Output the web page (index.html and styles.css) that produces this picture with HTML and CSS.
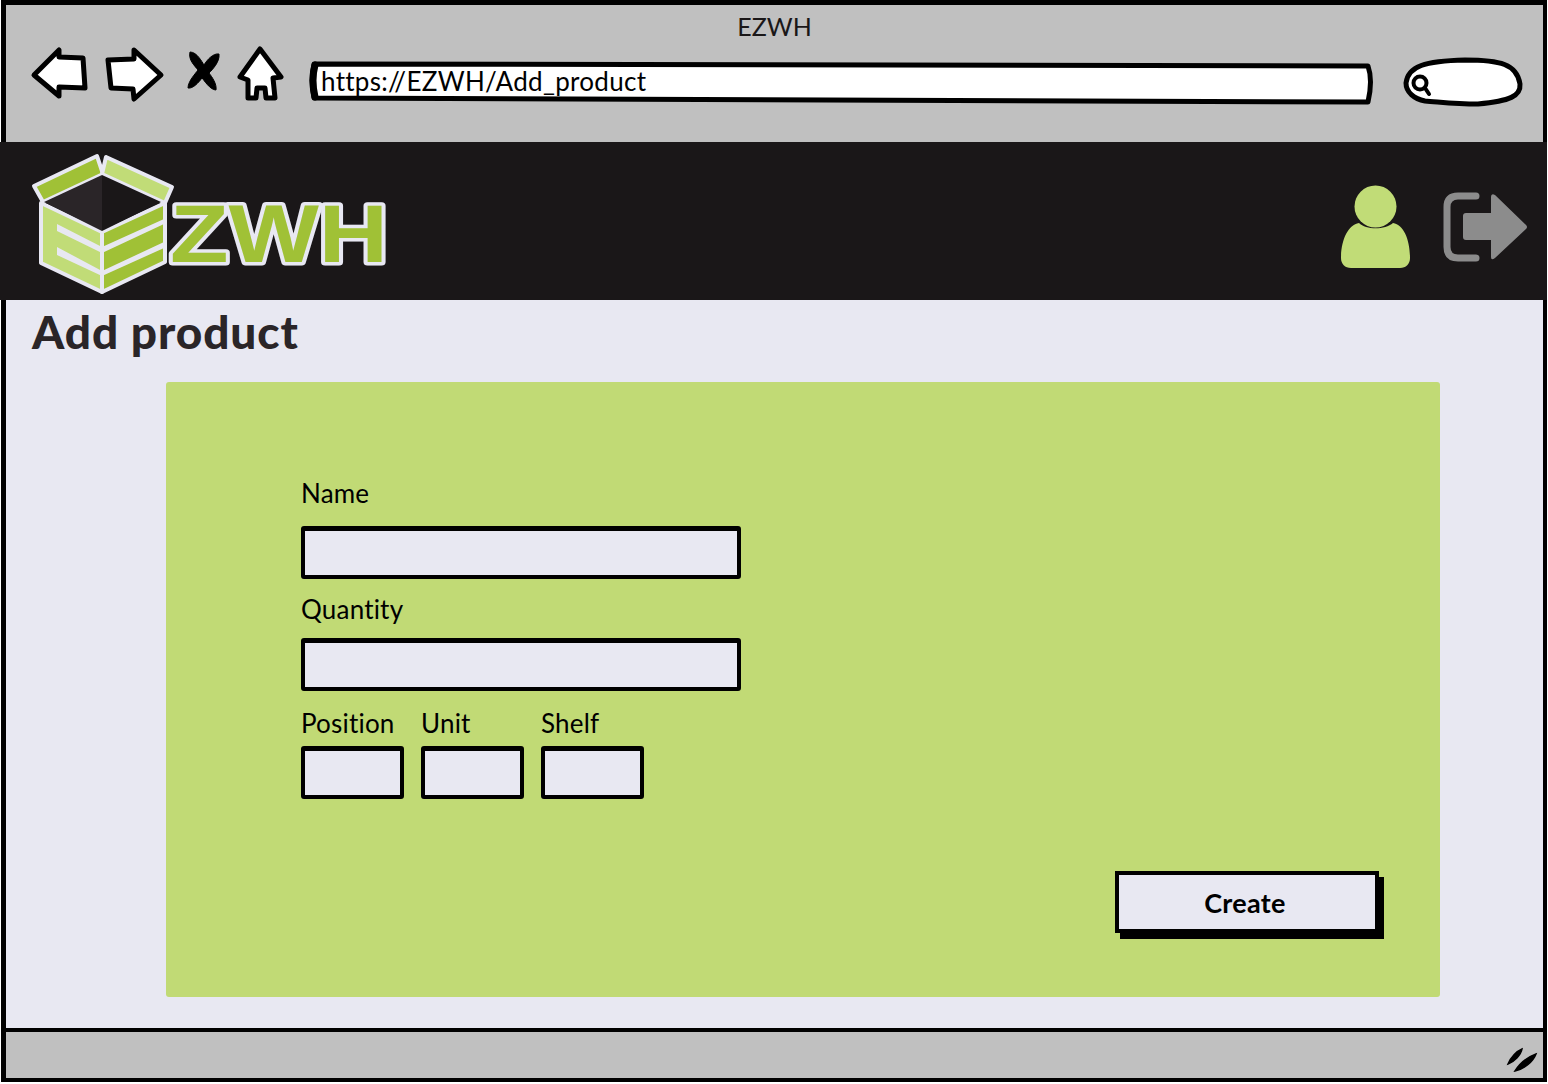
FILE: index.html
```html
<!DOCTYPE html>
<html lang="en">
<head>
    <meta charset="UTF-8">
    <meta name="viewport" content="width=device-width, initial-scale=1.0">
    <title>EZWH - Add product</title>
    <link rel="stylesheet" href="styles.css">
</head>
<body>
    <div class="window">
        <div class="chrome">
            <div class="chrome-title">EZWH</div>
            <div class="toolbar">
                <svg class="icon-back" width="60" height="60" viewBox="30 45 60 60">
                    <path class="sketch" d="M34 75 L59 50 L59 57 L83 58 L85 88 L59 87 L59 96 Z"/>
                </svg>
                <svg class="icon-forward" width="60" height="60" viewBox="105 45 60 60">
                    <path class="sketch" d="M108 60 L134 59 L134 50 L161 75 L134 99 L133 89 L111 88 Z"/>
                </svg>
                <svg class="icon-stop" width="36" height="60" viewBox="186 45 36 60">
                    <path class="stop-mark" d="M190 52 C197 52 202 62 204 65 C207 60 213 53 219 54 C220 62 212 70 209 73 C212 77 217 84 216 90 C210 90 204 80 202 78 C199 82 193 89 188 88 C188 81 196 73 198 70 C195 66 188 60 190 52 Z"/>
                </svg>
                <svg class="icon-home" width="50" height="60" viewBox="236 45 50 60">
                    <path class="sketch" d="M260 49 L281 77 L273 78 L275 98 L266 98 L265 88 L257 88 L256 98 L248 98 L248 80 L240 77 Z"/>
                </svg>
                <div class="address">
                    <svg class="address-shape" width="1066" height="46" viewBox="308 60 1066 46">
                        <path class="sketch" d="M314 64 L1368 66 Q1373 80 1368 102 L314 98 Q310 80 314 64 Z"/>
                        <path class="address-edge" d="M315 65 Q311 80 315 97"/>
                    </svg>
                    <span class="address-text">https://EZWH/Add_product</span>
                </div>
                <svg class="icon-search" width="122" height="50" viewBox="1402 57 122 50">
                    <path class="sketch" d="M1406 83 C1408 66 1425 61 1465 60 C1500 60 1517 64 1520 84 C1521 96 1510 101 1478 104 C1455 104 1440 102 1425 101 C1414 99 1406 92 1406 83 Z"/>
                    <circle class="lens" cx="1420" cy="83" r="6.5"/>
                    <path class="lens" d="M1425 88 L1429 94"/>
                </svg>
            </div>
        </div>

        <header class="app-header">
            <svg class="logo" width="360" height="146" viewBox="30 153 360 146">
                <g class="logo-lines">
                    <path class="green" d="M34 187 L97 157 L103 175 L43 203 Z"/>
                    <path class="light" d="M106 158 L172 188 L165 204 L102 175 Z"/>
                    <path class="light" d="M41 204 L102 233 L102 293 L41 264 Z"/>
                    <path class="green" d="M102 233 L165 204 L165 263 L102 293 Z"/>
                </g>
                <path class="pit-left" d="M44 203 L102 176 L102 232 Z"/>
                <path class="pit-right" d="M102 176 L161 203 L102 232 Z"/>
                <path class="stripe" d="M57 225 L102 248 L164 220 L164 225 L102 254 L57 232 Z"/>
                <path class="stripe" d="M57 248 L102 272 L164 243 L164 249 L102 277 L57 256 Z"/>
                <text class="logo-text" x="170" y="263" textLength="218" lengthAdjust="spacingAndGlyphs">ZWH</text>
            </svg>
            <div class="header-icons">
                <svg width="70" height="84" viewBox="1341 185 70 84">
                    <circle class="user" cx="1375.5" cy="206.5" r="21"/>
                    <path class="user" d="M1359 223 C1366 230 1385 230 1393 223 C1404 225 1410 240 1410 258 C1410 264 1406 268 1400 268 L1351 268 C1345 268 1341 264 1341 258 C1341 240 1348 225 1359 223 Z"/>
                </svg>
                <svg class="logout" width="85" height="70" viewBox="1443 192 85 70">
                    <path class="logout-door" d="M1476 196 L1458 196 Q1447 196 1447 207 L1447 247 Q1447 258 1458 258 L1476 258"/>
                    <path class="logout-arrow" d="M1466 213 L1491 213 L1491 197 Q1491 193 1495 195 L1526 225 Q1528 227 1526 229 L1495 258 Q1491 261 1491 257 L1491 240 L1466 240 Q1463 240 1463 237 L1463 216 Q1463 213 1466 213 Z"/>
                </svg>
            </div>
        </header>

        <main class="content">
            <h1>Add product</h1>
            <form class="card">
                <div class="fields">
                    <label class="field-label">Name</label>
                    <div class="input input-wide"></div>
                    <label class="field-label label-quantity">Quantity</label>
                    <div class="input input-wide"></div>
                    <div class="location">
                        <div class="location-item">
                            <label class="field-label">Position</label>
                            <div class="input input-small"></div>
                        </div>
                        <div class="location-item">
                            <label class="field-label">Unit</label>
                            <div class="input input-small"></div>
                        </div>
                        <div class="location-item">
                            <label class="field-label">Shelf</label>
                            <div class="input input-small"></div>
                        </div>
                    </div>
                </div>
                <div class="buttons">
                    <button type="button" class="create">Create</button>
                </div>
            </form>
        </main>

        <footer class="statusbar">
            <svg class="grip" width="34" height="28" viewBox="1504 1045 34 28">
                <path d="M1507 1063 C1510 1056 1516 1050 1521 1048 C1520 1054 1513 1061 1507 1063 Z"/>
                <path d="M1514 1070 C1519 1062 1527 1056 1535 1053 C1532 1061 1523 1068 1514 1070 Z"/>
            </svg>
        </footer>
    </div>
</body>
</html>
```

FILE: styles.css
```css
* {
    box-sizing: border-box;
}

body {
    margin: 0;
    background-color: white;
    font-family: "Lato", "Noto Sans", sans-serif;
    font-variant-ligatures: none;
    color: #000;
}

svg {
    display: block;
    flex: none;
}

.window {
    width: 1546px;
    height: 1082px;
    margin-left: 1px;
    display: flex;
    flex-direction: column;
    border: 5px solid #000;
    border-right-width: 4px;
    border-bottom-width: 4px;
    background: #e8e8f2;
}

/* browser chrome */
.chrome {
    height: 137px;
    flex: none;
    background: #c0c0c0;
}

.chrome-title {
    height: 40px;
    padding-top: 3px;
    font-size: 25px;
    line-height: 36px;
    text-align: center;
    color: #1a1718;
}

.toolbar {
    display: flex;
    align-items: flex-start;
    padding-left: 24px;
}

.sketch {
    fill: white;
    stroke: #000;
    stroke-width: 5;
    stroke-linejoin: round;
}

.stop-mark {
    stroke: #000;
    stroke-width: 1;
}

.icon-forward {
    margin-left: 15px;
}

.icon-stop {
    margin-left: 21px;
}

.icon-home {
    margin-left: 14px;
}

.address {
    position: relative;
    width: 1066px;
    height: 46px;
    margin-left: 22px;
    margin-top: 15px;
    padding-left: 13px;
    display: flex;
    align-items: center;
}

.address-shape {
    position: absolute;
    left: 0;
    top: 0;
}

.address-edge {
    fill: none;
    stroke: #000;
    stroke-width: 7;
    stroke-linecap: round;
}

.address-text {
    position: relative;
    font-size: 26px;
    line-height: 40px;
    letter-spacing: 0.3px;
    margin-top: -4px;
}

.icon-search {
    margin-left: 28px;
    margin-top: 12px;
}

.lens {
    fill: none;
    stroke: #000;
    stroke-width: 4;
    stroke-linecap: round;
}

/* app header */
.app-header {
    height: 158px;
    flex: none;
    margin: 0 -4px 0 -6px;
    padding: 10px 19px 0 30px;
    display: flex;
    justify-content: space-between;
    align-items: flex-start;
    background: #1a1718;
}

.logo-lines path {
    stroke: #e8e8f2;
    stroke-width: 4;
    stroke-linejoin: round;
}

.green {
    fill: #a0c136;
}

.light {
    fill: #c1dc77;
}

.pit-left {
    fill: #2a2528;
}

.pit-right {
    fill: #1a1718;
}

.stripe {
    fill: #e8e8f2;
}

.logo-text {
    font-family: "Liberation Sans", sans-serif;
    font-weight: bold;
    font-size: 82px;
    fill: #a0c136;
    stroke: #e8e8f2;
    stroke-width: 7;
    stroke-linejoin: round;
    paint-order: stroke;
}

.header-icons {
    display: flex;
    align-items: flex-start;
    margin-top: 33px;
}

.user {
    fill: #c1dc77;
}

.logout {
    margin-left: 32px;
    margin-top: 7px;
}

.logout-door {
    fill: none;
    stroke: #8c8c8c;
    stroke-width: 7;
    stroke-linecap: round;
}

.logout-arrow {
    fill: #8c8c8c;
}

/* page content */
.content {
    flex: 1;
    padding-left: 26px;
}

h1 {
    margin: 0;
    height: 82px;
    padding-top: 5px;
    font-size: 46px;
    line-height: 54px;
    letter-spacing: 0.9px;
    font-weight: 900;
    color: #2a2528;
}

.card {
    width: 1274px;
    height: 615px;
    margin-left: 134px;
    padding: 95px 61px 0 135px;
    display: flex;
    flex-direction: column;
    border-radius: 3px;
    background: #c1da75;
}

.fields {
    width: 440px;
}

.field-label {
    display: block;
    font-size: 26px;
    line-height: 32px;
    letter-spacing: 0.2px;
    color: #000;
}

.input {
    border: 4px solid #000;
    border-top-width: 5px;
    border-radius: 3px;
    background: #e8e8f2;
}

.input-wide {
    height: 53px;
    margin-top: 17px;
}

.label-quantity {
    margin-top: 14px;
    margin-bottom: -4px;
}

.location {
    display: flex;
    gap: 17px;
    margin-top: 16px;
}

.location-item {
    width: 103px;
}

.input-small {
    height: 53px;
    margin-top: 7px;
}

.buttons {
    display: flex;
    justify-content: flex-end;
    margin-top: 72px;
}

.create {
    width: 264px;
    height: 62px;
    padding: 0 4px 0 0;
    border: 4px solid #000;
    border-radius: 0;
    box-shadow: 5px 6px 0 #000;
    background: #e8e8f2;
    font-family: "Lato", "Noto Sans", sans-serif;
    font-size: 27px;
    letter-spacing: 0.3px;
    font-weight: bold;
    color: #000;
}

/* status bar */
.statusbar {
    height: 50px;
    flex: none;
    display: flex;
    justify-content: flex-end;
    padding-top: 14px;
    padding-right: 4px;
    border-top: 4px solid #000;
    background: #c0c0c0;
}

.grip path {
    fill: #000;
    stroke: #000;
    stroke-width: 1.5;
}
```
